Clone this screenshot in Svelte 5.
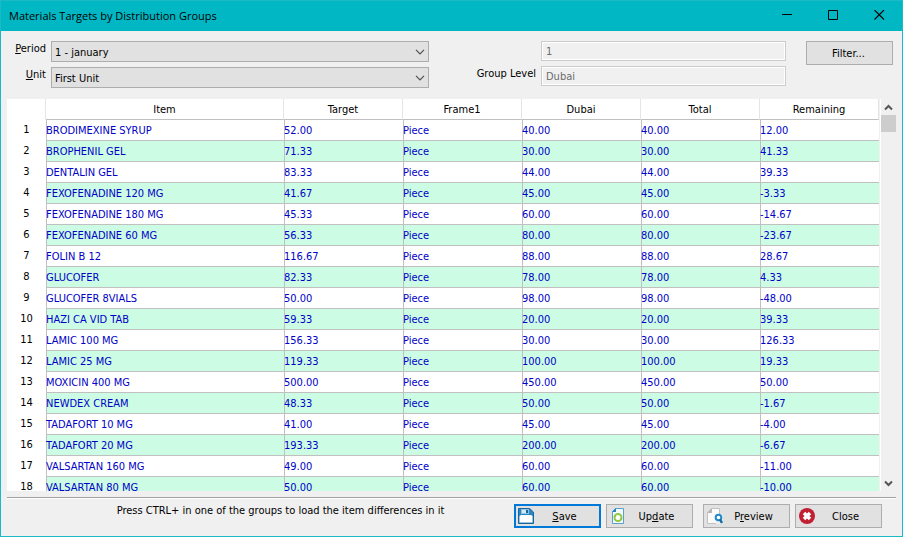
<script lang="ts">
	interface Row {
		item: string;
		target: string;
		dubai: string;
		remaining: string;
	}

	const columns = ['Item', 'Target', 'Frame1', 'Dubai', 'Total', 'Remaining'];

	const data: [string, string, string, string][] = [
		['BRODIMEXINE SYRUP', '52.00', '40.00', '12.00'],
		['BROPHENIL GEL', '71.33', '30.00', '41.33'],
		['DENTALIN GEL', '83.33', '44.00', '39.33'],
		['FEXOFENADINE 120 MG', '41.67', '45.00', '-3.33'],
		['FEXOFENADINE 180 MG', '45.33', '60.00', '-14.67'],
		['FEXOFENADINE 60 MG', '56.33', '80.00', '-23.67'],
		['FOLIN B 12', '116.67', '88.00', '28.67'],
		['GLUCOFER', '82.33', '78.00', '4.33'],
		['GLUCOFER 8VIALS', '50.00', '98.00', '-48.00'],
		['HAZI CA VID TAB', '59.33', '20.00', '39.33'],
		['LAMIC 100 MG', '156.33', '30.00', '126.33'],
		['LAMIC 25 MG', '119.33', '100.00', '19.33'],
		['MOXICIN 400 MG', '500.00', '450.00', '50.00'],
		['NEWDEX CREAM', '48.33', '50.00', '-1.67'],
		['TADAFORT 10 MG', '41.00', '45.00', '-4.00'],
		['TADAFORT 20 MG', '193.33', '200.00', '-6.67'],
		['VALSARTAN 160 MG', '49.00', '60.00', '-11.00'],
		['VALSARTAN 80 MG', '50.00', '60.00', '-10.00']
	];

	const rows: Row[] = data.map(([item, target, dubai, remaining]) => ({
		item,
		target,
		dubai,
		remaining
	}));

	let period = $state('1');
	let unit = $state('first');
	let grid: HTMLDivElement;

	function scroll(amount: number) {
		grid.scrollBy({ top: amount });
	}
</script>

{#snippet chevron()}
	<svg class="chevron" width="10" height="6" viewBox="0 0 10 6" aria-hidden="true">
		<path d="M1 .8 5 4.8 9 .8" fill="none" stroke="#505050" stroke-width="1.2" />
	</svg>
{/snippet}

<div class="window">
	<header class="titlebar">
		<h1>Materials Targets by Distribution Groups</h1>
		<button class="caption" aria-label="Minimize">
			<svg width="11" height="11" viewBox="0 0 11 11"><path d="M0 4.5h10" stroke="#000" /></svg>
		</button>
		<button class="caption" aria-label="Maximize">
			<svg width="11" height="11" viewBox="0 0 11 11">
				<path d="M.5 .5h9v9h-9z" fill="none" stroke="#000" />
			</svg>
		</button>
		<button class="caption" aria-label="Close window">
			<svg width="11" height="11" viewBox="0 0 11 11">
				<path d="M.5 0l9.500 9.500M10 0l-9.500 9.500" stroke="#000" stroke-width="1.1" />
			</svg>
		</button>
	</header>

	<form class="criteria" onsubmit={(e) => e.preventDefault()}>
		<div class="fields pickers">
			<label for="period"><u>P</u>eriod</label>
			<div class="combo">
				<select id="period" bind:value={period}>
					<option value="1">1 - january</option>
				</select>
				{@render chevron()}
			</div>
			<label for="unit"><u>U</u>nit</label>
			<div class="combo">
				<select id="unit" bind:value={unit}>
					<option value="first">First Unit</option>
				</select>
				{@render chevron()}
			</div>
		</div>
		<div class="fields level">
			<input class="level-number" aria-label="Level number" value="1" disabled />
			<label for="level">Group Level</label>
			<input id="level" value="Dubai" disabled />
		</div>
		<button class="btn filter" type="button"><span>Filter...</span></button>
	</form>

	<div class="grid-area">
		<div class="grid" bind:this={grid}>
			<table>
				<colgroup>
					<col class="col-number" />
					<col />
					{#each columns.slice(1) as column (column)}
						<col class="col-value" />
					{/each}
				</colgroup>
				<thead>
					<tr>
						<td class="corner"></td>
						{#each columns as column (column)}
							<th scope="col">{column}</th>
						{/each}
					</tr>
				</thead>
				<tbody>
					{#each rows as row, i (row.item)}
						<tr>
							<th scope="row">{i + 1}</th>
							<td>{row.item}</td>
							<td>{row.target}</td>
							<td>Piece</td>
							<td>{row.dubai}</td>
							<td>{row.dubai}</td>
							<td>{row.remaining}</td>
						</tr>
					{/each}
				</tbody>
			</table>
		</div>
		<div class="scrollbar">
			<button aria-label="Scroll up" onclick={() => scroll(-21)}>
				<svg width="9" height="7" viewBox="0 0 9 7">
					<path d="M1 5.5 4.5 2 8 5.5" fill="none" stroke="#555" stroke-width="2" />
				</svg>
			</button>
			<div class="thumb"></div>
			<button class="down" aria-label="Scroll down" onclick={() => scroll(21)}>
				<svg width="9" height="7" viewBox="0 0 9 7">
					<path d="M1 1.5 4.5 5 8 1.5" fill="none" stroke="#555" stroke-width="2" />
				</svg>
			</button>
		</div>
	</div>

	<footer>
		<p>Press CTRL+ in one of the groups to load the item differences in it</p>
		<div class="actions">
			<button class="btn default">
				<svg width="16" height="16" viewBox="0 0 16 16" aria-hidden="true">
					<path d="M.5 .5h11.3l3.7 3.7v11.3H.5z" fill="#2b87c4" stroke="#1b6599" />
					<path d="M3 1h8v5H3z" fill="#8fc3e6" />
					<path d="M4 2h6v3H4z" fill="#d5eaf7" />
					<path d="M8 2h2v3H8z" fill="#1b6599" />
					<path d="M1.5 8 3 7h10l1.5 1v6.5h-13z" fill="#fff" />
				</svg>
				<span><u>S</u>ave</span>
			</button>
			<button class="btn">
				<svg width="16" height="16" viewBox="0 0 16 16" aria-hidden="true">
					<path d="M5.5 .5h8v15h-11v-12z" fill="#f4f9fd" stroke="#5a9fce" />
					<path d="M6 0v4H2z" fill="#2b82bd" />
					<circle cx="8" cy="9.5" r="3.5" fill="#fff" stroke="#92c83e" stroke-width="2" />
					<path d="M3.5 8.5 6 6v3zM12.5 10.5 10 13v-3z" fill="#92c83e" />
				</svg>
				<span>Up<u>d</u>ate</span>
			</button>
		</div>
		<div class="actions">
			<button class="btn">
				<svg width="16" height="16" viewBox="0 0 16 16" aria-hidden="true">
					<path d="M4.5 .5h8v15H.5v-11z" fill="#fafafa" stroke="#c2c2c2" />
					<path d="M5 0v5H0z" fill="#b5b5b5" />
					<path d="M8 6h8v10H9z" fill="#e8edf0" />
					<circle cx="11.5" cy="9.5" r="2.8" fill="#fff" stroke="#218bc9" stroke-width="2" />
					<path d="M13 11.5 15 15" stroke="#176ca4" stroke-width="2.5" />
				</svg>
				<span>P<u>r</u>eview</span>
			</button>
			<button class="btn">
				<svg width="16" height="16" viewBox="0 0 16 16" aria-hidden="true">
					<circle cx="8" cy="8" r="8" fill="#c11f32" />
					<path d="M5 5l6 6M11 5l-6 6" stroke="#fff" stroke-width="3.5" />
				</svg>
				<span>Close</span>
			</button>
		</div>
	</footer>
</div>

<style>
	:global(body) {
		margin: 0;
	}

	.window {
		box-sizing: border-box;
		height: 100vh;
		min-height: 300px;
		display: flex;
		flex-direction: column;
		border: 1px solid #1cb9c6;
		background: #f0f0f0;
		color: #000;
		font: 11px/14px Tahoma, 'DejaVu Sans Condensed', 'Noto Sans', sans-serif;
	}

	button,
	input,
	select {
		box-sizing: border-box;
		margin: 0;
		font: inherit;
		color: inherit;
		border-radius: 0;
	}

	/* ===== TITLE BAR ===== */
	.titlebar {
		display: flex;
		align-items: center;
		height: 30px;
		flex-shrink: 0;
		padding-left: 8px;
		background: #00b7c3;
	}
	.titlebar h1 {
		flex: 1;
		margin: 0;
		font: 11px/16px 'Segoe UI', 'Open Sans', sans-serif;
	}
	.caption {
		display: flex;
		align-items: center;
		justify-content: center;
		width: 46px;
		height: 30px;
		padding: 0 0 2px;
		border: none;
		background: transparent;
	}

	/* ===== CRITERIA ===== */
	.criteria {
		display: flex;
		align-items: flex-start;
		padding: 10px 9px 11px 7px;
	}
	.fields {
		display: grid;
		gap: 5px;
	}
	.pickers {
		flex: 421 1 0;
		grid-template-columns: 38px 1fr;
	}
	.level {
		flex: 357 1 0;
		grid-template-columns: 107px 1fr;
	}
	.level-number {
		grid-column: 2;
	}
	label {
		padding-top: 1px;
		text-align: right;
		white-space: nowrap;
	}
	.combo {
		display: grid;
		align-items: center;
	}
	.combo > :global(*) {
		grid-area: 1 / 1;
	}
	select {
		width: 100%;
		height: 21px;
		padding: 2px 20px 0 3px;
		appearance: none;
		background: #e1e1e1;
		border: 1px solid #adadad;
	}
	.chevron {
		justify-self: end;
		margin-right: 4px;
		pointer-events: none;
	}
	input {
		width: 100%;
		min-width: 0;
		height: 20px;
		padding: 0 4px;
		border: 1px solid #ccc;
		box-shadow: inset 0 0 0 1px #fff;
		background: #f0f0f0;
		color: #6d6d6d;
	}

	.btn {
		display: flex;
		align-items: center;
		width: 87px;
		height: 24px;
		padding: 0 5px 0 3px;
		border: 1px solid #adadad;
		background: #e1e1e1;
	}
	.btn span {
		flex: 1;
		padding-top: 2px;
	}
	.btn.default {
		padding: 0 4px 0 2px;
		border: 2px solid #0078d7;
	}
	.btn.filter {
		flex-shrink: 0;
		margin-left: 20px;
	}

	/* ===== GRID ===== */
	.grid-area {
		flex: 1;
		min-height: 0;
		display: flex;
		margin: 0 6px;
	}
	.grid {
		flex: 1;
		overflow: auto;
		scrollbar-width: none;
		background: #fff;
	}
	table {
		width: 100%;
		table-layout: fixed;
		border-spacing: 0;
	}
	.col-number {
		width: 39px;
	}
	.col-value {
		width: 119px;
	}
	th,
	td {
		box-sizing: border-box;
		height: 21px;
		padding: 2px 0 0;
		border-bottom: 1px solid #c0c0c0;
		font-weight: normal;
		white-space: nowrap;
		overflow: hidden;
	}
	thead th,
	.corner {
		position: sticky;
		top: 0;
		background: #fff;
		border-right: 1px solid #e5e5e5;
	}
	.corner,
	tbody th {
		padding-top: 0;
		border-bottom-color: #fff;
	}
	tbody td {
		box-shadow: inset 1px 0 0 #c0c0c0;
		color: #0000c8;
	}
	tbody tr:nth-child(even) td {
		background: #ccfce4;
	}

	.scrollbar {
		display: flex;
		flex-direction: column;
		width: 15px;
		margin-left: 1px;
		border-left: 1px solid #fff;
	}
	.scrollbar button {
		display: flex;
		align-items: center;
		justify-content: center;
		height: 16px;
		padding: 0;
		border: none;
		background: transparent;
	}
	.scrollbar .down {
		margin-top: auto;
	}
	.thumb {
		height: 17px;
		background: #cdcdcd;
	}

	/* ===== FOOTER ===== */
	footer {
		display: flex;
		gap: 10px;
		margin: 6px 6px 0;
		padding: 6px 14px 8px 50px;
		border-top: 1px solid #a0a0a0;
		box-shadow: inset 0 1px 0 #fff;
	}
	footer p {
		flex: 1;
		margin: 0;
		text-align: center;
	}
	.actions {
		display: flex;
		gap: 5px;
	}
</style>
